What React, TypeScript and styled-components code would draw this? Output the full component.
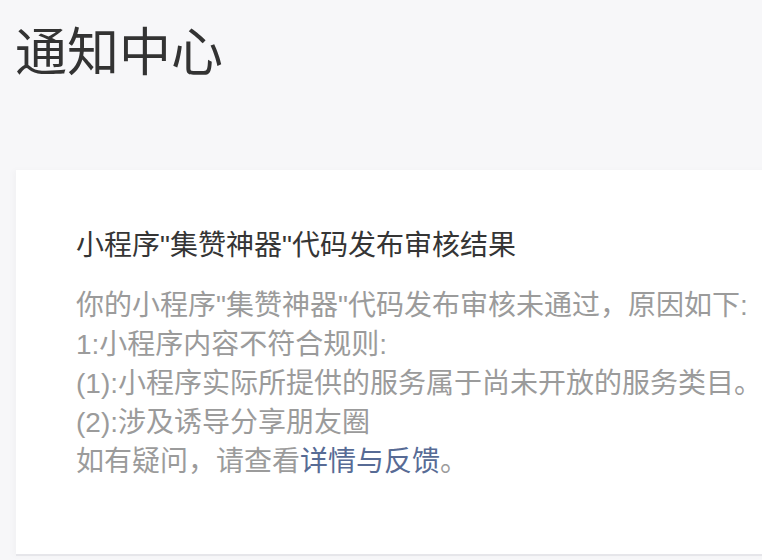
import React from 'react';
import styled, { createGlobalStyle } from 'styled-components';

const GlobalStyle = createGlobalStyle`
  html, body {
    margin: 0;
    padding: 0;
    background: #f7f7f9;
  }
  body {
    font-family: "Liberation Sans", "Noto Sans CJK SC", sans-serif;
    overflow: hidden;
  }
`;

type Notice = {
  title: string;
  lines: string[];
  linkPrefix: string;
  linkText: string;
};

const notice: Notice = {
  title: '小程序"集赞神器"代码发布审核结果',
  lines: [
    '你的小程序"集赞神器"代码发布审核未通过，原因如下:',
    '1:小程序内容不符合规则:',
    '(1):小程序实际所提供的服务属于尚未开放的服务类目。',
    '(2):涉及诱导分享朋友圈',
  ],
  linkPrefix: '如有疑问，请查看',
  linkText: '详情与反馈',
};

const App = () => {
  return (
    <StyledPage>
      <GlobalStyle />
      <StyledHeading>通知中心</StyledHeading>
      <StyledCard>
        <StyledTitle>{notice.title}</StyledTitle>
        <StyledBody>
          {notice.lines.map((line) => (
            <StyledLine key={line}>{line}</StyledLine>
          ))}
          <StyledLine>
            {notice.linkPrefix}
            <StyledLink href="#">{notice.linkText}</StyledLink>。
          </StyledLine>
        </StyledBody>
      </StyledCard>
    </StyledPage>
  );
};

export default App;

const StyledPage = styled.div`
  width: 762px;
  height: 560px;
  overflow: hidden;
  background: #f7f7f9;
`;

const StyledHeading = styled.h1`
  margin: 0;
  padding: 22px 0 0 15px;
  height: 170px;
  box-sizing: border-box;
  font-size: 52px;
  font-weight: 400;
  line-height: 62px;
  color: #333333;
`;

const StyledCard = styled.div`
  margin-left: 16px;
  width: 820px;
  box-sizing: border-box;
  padding: 56px 0 73px 60px;
  background: #ffffff;
  border-bottom: 2px solid #e6e6ea;
  box-shadow: -3px 0 6px rgba(0, 0, 0, 0.025);
`;

const StyledTitle = styled.div`
  font-size: 28px;
  line-height: 39px;
  color: #353535;
  white-space: nowrap;
`;

const StyledBody = styled.div`
  margin-top: 21px;
  font-size: 28px;
  line-height: 39px;
  color: #9b9b9b;
`;

const StyledLine = styled.div`
  white-space: nowrap;
`;

const StyledLink = styled.a`
  color: #576b95;
  text-decoration: none;
`;
